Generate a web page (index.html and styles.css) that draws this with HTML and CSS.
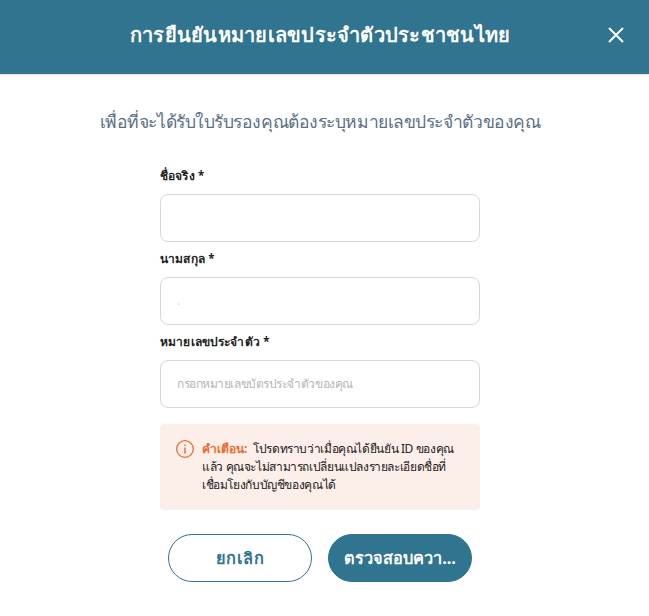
FILE: index.html
```html
<!DOCTYPE html>
<html lang="th">
<head>
<meta charset="utf-8">
<title>การยืนยันหมายเลขประจำตัวประชาชนไทย</title>
<link rel="stylesheet" href="styles.css">
</head>
<body>
<div class="modal">
    <div class="header">
        <h2 class="title">การยืนยันหมายเลขประจำตัวประชาชนไทย</h2>
        <button class="close" type="button" aria-label="ปิด">
            <svg width="16" height="16" viewBox="0 0 16 16"><path d="M1 1L15 15M15 1L1 15" stroke="#fff" stroke-width="2" fill="none"/></svg>
        </button>
    </div>
    <p class="intro">เพื่อที่จะได้รับใบรับรองคุณต้องระบุหมายเลขประจำตัวของคุณ</p>
    <form class="form">
        <label for="fname">ชื่อจริง <span class="req">*</span></label>
        <input id="fname" type="text">
        <label for="lname">นามสกุล <span class="req">*</span></label>
        <input id="lname" class="faint" type="text" placeholder=".">
        <label for="idnum">หมายเลขประจำตัว <span class="req">*</span></label>
        <input id="idnum" type="text" placeholder="กรอกหมายเลขบัตรประจำตัวของคุณ">
        <div class="warning">
            <svg width="18" height="18" viewBox="0 0 18 18"><circle cx="9" cy="9" r="8.3" fill="none" stroke="#ee6a2c" stroke-width="1.3"/><path d="M9 7.5v6M9 4.5v1.5" stroke="#ee6a2c" stroke-width="1.5"/></svg>
            <p><b>คำเตือน:</b> โปรดทราบว่าเมื่อคุณได้ยืนยัน ID ของคุณ<br>แล้ว คุณจะไม่สามารถเปลี่ยนแปลงรายละเอียดชื่อที่<br>เชื่อมโยงกับบัญชีของคุณได้</p>
        </div>
        <div class="buttons">
            <button type="button" class="btn cancel">ยกเลิก</button>
            <button type="button" class="btn check">ตรวจสอบควา...</button>
        </div>
    </form>
</div>
</body>
</html>
```
FILE: styles.css
```css
* { box-sizing: border-box; }
body {
    margin: 0;
    background: #fff;
    font-family: "Noto Sans", "Open Sans", sans-serif;
    color: #222;
}
.header {
    display: flex;
    align-items: center;
    height: 75px;
    padding: 0 25px 4px 41px;
    border-bottom: 1px solid #e2e4ea;
    background: #31748f;
    background-clip: padding-box;
}
.title {
    flex: 1;
    margin: 0;
    padding-right: 9px;
    text-align: center;
    white-space: nowrap;
    font-size: 20px;
    line-height: 28px;
    letter-spacing: 0.25px;
    color: #fff;
}
.close {
    display: flex;
    padding: 0;
    border: 0;
    background: none;
}
.intro {
    margin: 32px 9px 0 0;
    text-align: center;
    white-space: nowrap;
    font-size: 17.5px;
    line-height: 28px;
    letter-spacing: -0.45px;
    color: #5b6f86;
}
.form {
    width: 320px;
    margin: 31px 0 0 160px;
}
label {
    display: block;
    height: 28px;
    line-height: 20px;
    font-size: 12px;
    font-weight: bold;
    letter-spacing: 0.15px;
}
.req { font-size: 11.5px; }
input {
    display: block;
    width: 320px;
    height: 48px;
    margin-bottom: 7px;
    padding: 0 16px 2px;
    border: 1px solid #d6d6dc;
    border-radius: 8px;
    font-family: inherit;
    font-size: 12px;
    letter-spacing: -0.45px;
}
input::placeholder { color: #b5b5b5; }
.faint::placeholder { color: #dadada; }
.warning {
    display: flex;
    gap: 8px;
    height: 86px;
    margin-top: 16px;
    padding: 16px;
    border-radius: 4px;
    background: #fcefea;
}
.warning p {
    margin: 0;
    white-space: nowrap;
    font-size: 12px;
    line-height: 18px;
    letter-spacing: -0.38px;
}
.warning b {
    margin-right: 3px;
    letter-spacing: 0;
    color: #ee6a2c;
}
.buttons {
    display: flex;
    gap: 16px;
    margin: 24px 8px 0;
}
.btn {
    width: 144px;
    height: 48px;
    padding: 0;
    border: 1px solid #31748f;
    border-radius: 24px;
    font-family: inherit;
    font-size: 16.3px;
    font-weight: bold;
}
.cancel {
    background: #fff;
    font-size: 16.3px;
    letter-spacing: 0.6px;
    color: #31748f;
}
.check { background: #31748f; color: #fff; }
```
